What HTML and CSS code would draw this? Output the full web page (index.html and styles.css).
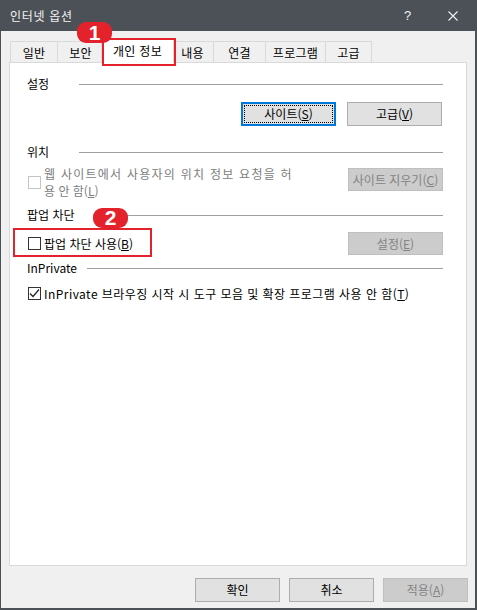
FILE: index.html
```html
<!DOCTYPE html>
<html lang="ko">
<head>
<meta charset="utf-8">
<title>인터넷 옵션</title>
<link rel="stylesheet" href="styles.css">
</head>
<body>
<div class="window">
  <header class="titlebar">
    <span class="title">인터넷 옵션</span>
    <div class="controls">
      <span class="ctl help">?</span>
      <span class="ctl close"><svg width="10" height="10" viewBox="0 0 10 10"><path d="M0.5 0.5L9.5 9.5M9.5 0.5L0.5 9.5" stroke="#f2f2f2" stroke-width="1.1" fill="none"/></svg></span>
    </div>
  </header>
  <div class="body">
    <div class="tabs">
      <div class="tab t1">일반</div>
      <div class="tab t2">보안</div>
      <div class="tab t3 selected">개인 정보</div>
      <div class="tab t4">내용</div>
      <div class="tab t5">연결</div>
      <div class="tab t6">프로그램</div>
      <div class="tab t7">고급</div>
    </div>
    <div class="panel">
      <div class="group-head"><span class="label">설정</span><span class="rule"></span></div>
      <div class="btn-row">
        <button class="btn focused">사이트(<u>S</u>)</button>
        <button class="btn">고급(<u>V</u>)</button>
      </div>

      <div class="group-head head-loc"><span class="label">위치</span><span class="rule"></span></div>
      <div class="loc-row">
        <div class="check-line disabled">
          <span class="cb"></span>
          <span class="cb-text"><span class="spaced">웹 사이트에서 사용자의 위치 정보 요청을 허</span><br>용 안 함(<u>L</u>)</span>
        </div>
        <button class="btn disabled-btn clear-btn">사이트 지우기(<u>C</u>)</button>
      </div>

      <div class="group-head head-popup"><span class="label label-popup">팝업 차단</span><span class="rule"></span></div>
      <div class="popup-row">
        <div class="check-line">
          <span class="cb"></span>
          <span class="cb-text">팝업 차단 사용(<u>B</u>)</span>
        </div>
        <button class="btn disabled-btn">설정(<u>E</u>)</button>
      </div>

      <div class="group-head head-inp"><span class="label label-wide">InPrivate</span><span class="rule"></span></div>
      <div class="inp-row">
        <div class="check-line">
          <span class="cb checked"><svg width="11" height="11" viewBox="0 0 11 11"><path d="M1 5.5L4 8.5L10 1.5" stroke="#222" stroke-width="1.2" fill="none"/></svg></span>
          <span class="cb-text inp-text">InPrivate 브라우징 시작 시 도구 모음 및 확장 프로그램 사용 안 함(<u>T</u>)</span>
        </div>
      </div>
    </div>
    <div class="footer">
      <button class="btn fbtn">확인</button>
      <button class="btn fbtn">취소</button>
      <button class="btn fbtn disabled-btn">적용(<u>A</u>)</button>
    </div>
  </div>

  <div class="callout callout-1"></div>
  <div class="badge badge-1">1</div>
  <div class="callout callout-2"></div>
  <div class="badge badge-2">2</div>
</div>
</body>
</html>
```

FILE: styles.css
```css
* { box-sizing: border-box; }
html, body { margin: 0; padding: 0; background: #ffffff; }
body {
  font-family: "Noto Sans CJK KR", "Noto Sans", sans-serif;
  font-size: 12px;
  color: #000;
}
.window {
  position: relative;
  width: 477px;
  height: 610px;
  background: #f0f0f0;
  border-left: 1px solid #4b5157;
  border-right: 2px solid #4b5157;
  border-bottom: 2px solid #4b5157;
  display: flex;
  flex-direction: column;
  overflow: hidden;
}
.titlebar {
  height: 31px;
  flex: none;
  background: #4b5157;
  display: flex;
  align-items: center;
  justify-content: space-between;
  padding-left: 9px;
  color: #f2f2f2;
}
.title { font-size: 12px; line-height: 16px; letter-spacing: 0.7px; }
.controls { display: flex; height: 31px; }
.ctl {
  width: 46px;
  height: 31px;
  display: flex;
  align-items: center;
  justify-content: center;
}
.help { font-size: 13px; padding-left: 3px; padding-bottom: 1px; font-family: "Liberation Sans", sans-serif; }
.close { padding-left: 2px; }

.body {
  flex: 1;
  display: flex;
  flex-direction: column;
  padding: 10px 0 0 8px;
}
.tabs {
  display: flex;
  align-items: flex-end;
  height: 21px;
  margin-left: 1px;
}
.tab {
  height: 21px;
  border: 1px solid #d9d9d9;
  border-bottom: none;
  margin-right: -1px;
  background: #f0f0f0;
  display: flex;
  align-items: center;
  justify-content: center;
  line-height: 16px;
  padding-top: 1px;
  letter-spacing: 0.3px;
}
.t1 { width: 48px; }
.t2 { width: 47px; }
.t3 { width: 69px; }
.t4 { width: 43px; }
.t5 { width: 53px; }
.t6 { width: 61px; }
.t7 { width: 47px; }
.tab.selected {
  width: 73px;
  height: 25px;
  margin: 0 -3px -1px -2px;
  background: #ffffff;
  position: relative;
  z-index: 1;
  padding-top: 0;
  padding-bottom: 1px;
}

.panel {
  width: 458px;
  height: 504px;
  flex: none;
  background: #ffffff;
  border: 1px solid #d9d9d9;
  padding: 13px 23px 0 17px;
}
.group-head {
  display: flex;
  align-items: center;
  height: 16px;
  line-height: 16px;
}
.label { min-width: 52px; }
.label-popup { min-width: 66px; }
.label-wide { min-width: 60px; }
.rule { flex: 1; height: 1px; background: #a0a0a0; }

.btn {
  font-family: inherit;
  font-size: 12px;
  color: #000;
  background: #e1e1e1;
  border: 1px solid #adadad;
  padding: 0;
  width: 95px;
  height: 24px;
  line-height: 16px;
  margin: 0;
}
.btn u { text-underline-offset: 1px; }
.btn.focused {
  border: 1px solid #0078d7;
  box-shadow: inset 0 0 0 1px #0078d7;
  outline: 1px dotted #000;
  outline-offset: -4px;
}
.disabled-btn {
  background: #cccccc;
  border-color: #bfbfbf;
  color: #838383;
}
.btn-row {
  display: flex;
  justify-content: flex-end;
  gap: 11px;
  margin-top: 10px;
  padding-right: 1px;
}
.head-loc { margin-top: 18px; }
.loc-row {
  display: flex;
  justify-content: space-between;
  align-items: flex-start;
  margin-top: 5px;
}
.clear-btn { margin-top: 3px; height: 23px; }
.check-line {
  display: flex;
  align-items: center;
  gap: 3px;
  line-height: 17px;
}
.spaced { letter-spacing: 1.25px; }
.inp-text { letter-spacing: 0.45px; }
.cb {
  width: 13px;
  height: 13px;
  flex: none;
  border: 1px solid #333333;
  background: #ffffff;
  display: flex;
  align-items: center;
  justify-content: center;
  margin-left: 1px;
}
.check-line.disabled { color: #7d7d7d; }
.check-line.disabled .cb { border-color: #c4c4c4; }
.head-popup { margin-top: 8px; }
.popup-row {
  display: flex;
  justify-content: space-between;
  align-items: center;
  margin-top: 9px;
  height: 23px;
}
.popup-row .btn { height: 23px; }
.head-inp { margin-top: 5px; }
.inp-row { margin-top: 9px; }

.footer {
  display: flex;
  justify-content: flex-end;
  gap: 9px;
  margin-top: 12px;
  padding-right: 7px;
}
.fbtn { width: 85px; height: 24px; }

.callout {
  position: absolute;
  border: 2px solid #e3222b;
  z-index: 5;
}
.callout-1 { left: 101px; top: 38px; width: 74px; height: 28px; }
.callout-2 { left: 12px; top: 228px; width: 139px; height: 29px; }
.badge {
  position: absolute;
  z-index: 6;
  width: 35px;
  height: 21px;
  border-radius: 9px;
  background: #e3222b;
  color: #ffffff;
  font-family: "Liberation Sans", Arial, sans-serif;
  font-weight: bold;
  font-size: 21px;
  line-height: 21px;
  text-align: center;
}
.badge-1 { left: 76px; top: 22px; }
.badge-2 { left: 92px; top: 208px; height: 20px; line-height: 20px; }
```
